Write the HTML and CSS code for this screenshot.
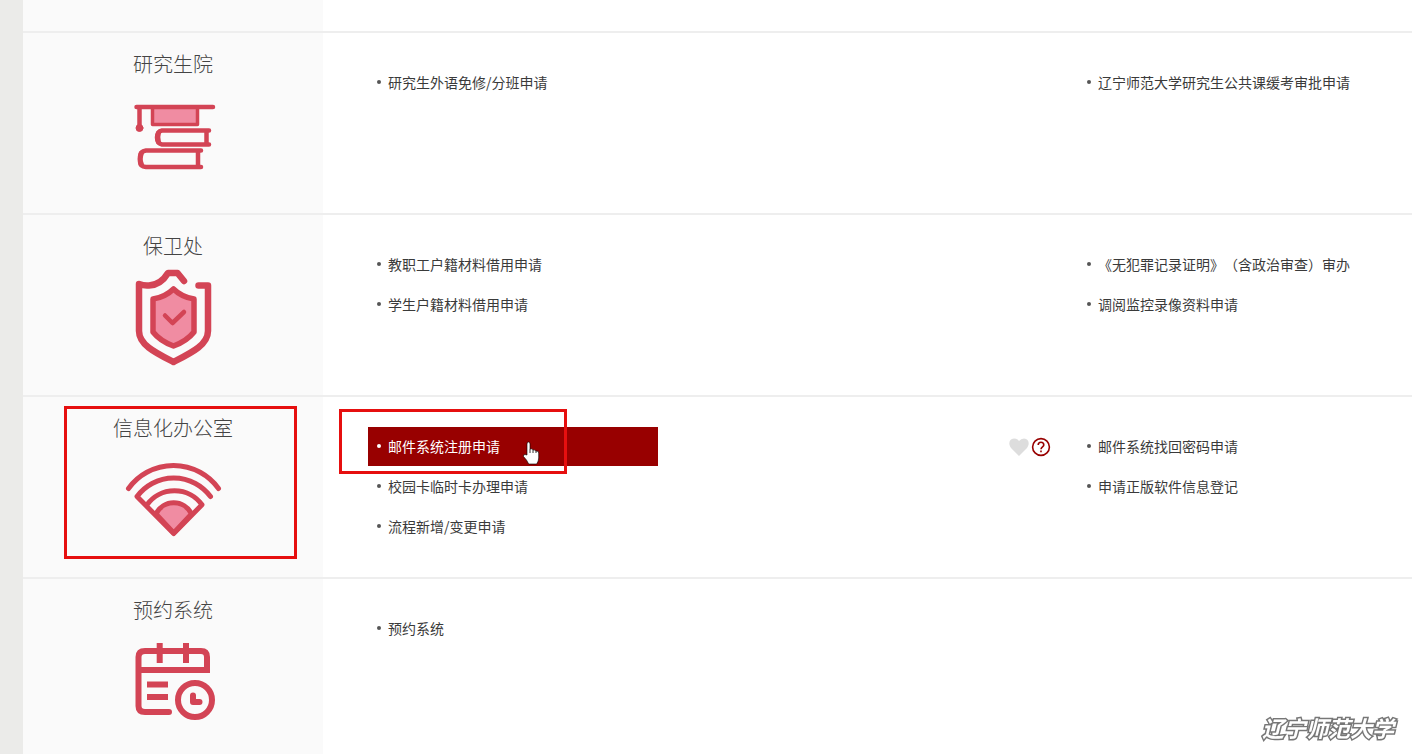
FILE: index.html
```
<!DOCTYPE html>
<html lang="zh-CN">
<head>
    <meta charset="UTF-8">
    <meta name="viewport" content="width=device-width, initial-scale=1.0">
    <title>辽宁师范大学</title>
    <link rel="stylesheet" href="styles.css">
</head>
<body>
    <main class="panel">
        <div class="row-tail"></div>

        <section class="row">
            <div class="category">
                <h2>研究生院</h2>
                <svg class="icon" viewBox="0 0 100 100" aria-hidden="true">
                    <path class="tint" d="M29.500 22h45v17.500h-45z" stroke-width="3.500"/>
                    <path d="M13.500 22H90M16.500 22v20" stroke-width="4.500"/>
                    <circle class="solid" cx="16.500" cy="43" r="3.500"/>
                    <path d="M86 45.500H39q-5 1-5 7t5 7h47M83.500 45.500v14" stroke-width="4.500"/>
                    <path d="M78 65.500H23q-6 1-6 6v5q0 5 6 5.500h55M75 65.500v16.500" stroke-width="4.500"/>
                    <path d="M18.500 68q-2.500 6 0 11.500M35.500 48q-1.500 4.500 0 9" stroke-width="5"/>
                </svg>
            </div>
            <ul class="links">
                <li><a href="#">研究生外语免修/分班申请</a></li>
                <li><a href="#">辽宁师范大学研究生公共课缓考审批申请</a></li>
            </ul>
        </section>

        <section class="row">
            <div class="category">
                <h2>保卫处</h2>
                <svg class="icon" viewBox="0 0 100 100" aria-hidden="true">
                    <path d="M75.500 18.500H85v45.500c0 14-17 22-34.500 31C33 86 16 78 16 64V17q5 2 10 1.500C36 18 42 11 45 6h9.500l6.500 8" stroke-width="6.500"/>
                    <path class="tint" d="M50.500 22q8 8 20.500 10v33q-7 9-20.500 14Q37 74 30 65V32q12.500-2 20.500-10z" stroke-width="5.500"/>
                    <path d="M42 48.500l7.500 7.500L61 45" stroke-width="4.500"/>
                </svg>
            </div>
            <ul class="links">
                <li><a href="#">教职工户籍材料借用申请</a></li>
                <li><a href="#">《无犯罪记录证明》（含政治审查）审办</a></li>
                <li><a href="#">学生户籍材料借用申请</a></li>
                <li><a href="#">调阅监控录像资料申请</a></li>
            </ul>
        </section>

        <section class="row">
            <div class="category marked">
                <h2>信息化办公室</h2>
                <svg class="icon" viewBox="0 0 100 100" aria-hidden="true">
                    <path class="tint" d="M33 65a19.700 19.700 0 0 1 35.500 0L50.700 84z" stroke-width="5"/>
                    <path d="M5.500 39.500a55.500 55.500 0 0 1 90 0" stroke-width="5"/>
                    <path d="M87.500 47.500a45.700 45.700 0 0 0-73.500 0l36.700 37L79 55.700a34 34 0 0 0-55 0" stroke-width="5"/>
                </svg>
            </div>
            <ul class="links">
                <li class="marked">
                    <a class="active" href="#">邮件系统注册申请</a>
                    <span class="actions">
                        <button type="button" aria-label="收藏">
                            <svg viewBox="0 0 20 20" aria-hidden="true"><path fill="#dddddd" d="M10 19L2 11C-1 7 0 2 5 1.500q3 0 5 2.500 2-2.500 5-2.500c5 .5 6 5.500 3 9.500z"/></svg>
                        </button>
                        <button type="button" aria-label="帮助">
                            <svg viewBox="0 0 20 20" aria-hidden="true"><g fill="none" stroke="#980000" stroke-width="1.600"><circle cx="10" cy="10" r="8.400"/><path d="M7.200 8q0-2.800 2.800-2.800T12.800 8c0 1.800-2.800 2-2.800 4.200M10 13.500v1.800"/></g></svg>
                        </button>
                    </span>
                    <svg class="cursor" viewBox="0 0 18 24" aria-hidden="true"><path fill="#fff" stroke="#000" stroke-width=".6" d="M5 14V3q0-2 1.500-2T8 3v5q2.500-.8 3 1 2-.6 2.700 1 3-.5 3 2v5q0 3-2 6h-8Q5 19 1.500 15.500 1 13.500 3 13.500z"/><path fill="none" stroke="#000" stroke-width=".8" d="M8 8v4M11 9v3M14 10v2"/></svg>
                </li>
                <li><a href="#">邮件系统找回密码申请</a></li>
                <li><a href="#">校园卡临时卡办理申请</a></li>
                <li><a href="#">申请正版软件信息登记</a></li>
                <li><a href="#">流程新增/变更申请</a></li>
            </ul>
        </section>

        <section class="row">
            <div class="category">
                <h2>预约系统</h2>
                <svg class="icon" viewBox="0 0 100 100" aria-hidden="true">
                    <path d="M46 81H22q-6.500 0-6.500-6V26q0-6 6.500-6h56q6 0 6 6v13H16" stroke-width="6"/>
                    <path class="flat" d="M36.700 12v20M63 12v20M84 35v7M24 53.500h21M24 66h21" stroke-width="6"/>
                    <circle cx="72" cy="69" r="17" stroke-width="6"/>
                    <path d="M70 64.500V71h6.500" stroke-width="6"/>
                </svg>
            </div>
            <ul class="links">
                <li><a href="#">预约系统</a></li>
            </ul>
        </section>
    </main>
    <p class="watermark">辽宁师范大学</p>
</body>
</html>
```
FILE: styles.css
```
*,
*::before,
*::after {
    box-sizing: border-box;
}
body {
    margin: 0;
    height: 100vh;
    overflow: hidden;
    padding-left: 23px;
    background: #ebebe9;
    color: #3a3a3a;
    font-family: "Noto Sans CJK SC", sans-serif;
    font-size: 14px;
    text-spacing-trim: space-all;
}
.panel {
    min-height: 100%;
    background: linear-gradient(to right, #fafafa 300px, #ffffff 300px);
}
.row-tail {
    height: 33px;
    border-bottom: 2px solid #eeeeee;
}
.row {
    display: flex;
    min-height: 182px;
    border-bottom: 2px solid #eeeeee;
}
.category {
    position: relative;
    flex: 0 0 300px;
    padding-top: 10px;
    text-align: center;
}
.category h2 {
    margin: 0;
    font-size: 20px;
    font-weight: 300;
    line-height: 42px;
    color: #444444;
}
.icon {
    display: block;
    width: 100px;
    height: 100px;
    margin: 0 auto;
    fill: none;
    stroke: #d34455;
    stroke-linecap: round;
    stroke-linejoin: round;
}
.icon .tint {
    fill: #f08ca2;
}
.icon .solid {
    fill: #d34455;
}
.icon .flat {
    stroke-linecap: butt;
}
.links {
    flex: 1;
    display: grid;
    grid-template-columns: minmax(0, 17fr) minmax(0, 8fr);
    grid-auto-rows: 39px;
    row-gap: 1px;
    margin: 0;
    padding: 30px 0 0 45px;
    list-style: none;
}
.links li {
    position: relative;
    display: flex;
    align-items: center;
    justify-content: space-between;
    padding-right: 27px;
}
.links a {
    display: flex;
    align-items: center;
    gap: 7px;
    min-width: 290px;
    padding-left: 9px;
    line-height: 39px;
    color: inherit;
    text-decoration: none;
    white-space: nowrap;
}
.links a::before {
    content: "";
    width: 4px;
    height: 4px;
    margin-bottom: 2px;
    border-radius: 50%;
    background: #555555;
}
.links a.active {
    background: #980000;
    color: #ffffff;
}
.links a.active::before {
    background: #ffffff;
}
.actions {
    display: flex;
    gap: 2px;
}
.actions button {
    width: 20px;
    height: 20px;
    padding: 0;
    border: 0;
    background: none;
    cursor: pointer;
}
.actions svg {
    display: block;
}
.cursor {
    position: absolute;
    left: 154px;
    top: 14px;
    width: 18px;
    height: 24px;
}
/* red frames around the highlighted entries */
.marked::after {
    content: "";
    position: absolute;
    border: 3px solid #e60f0f;
    pointer-events: none;
}
.category.marked::after {
    left: 41px;
    top: 9px;
    width: 233px;
    height: 153px;
}
.links .marked::after {
    left: -29px;
    top: -18px;
    width: 228px;
    height: 65px;
}
.watermark {
    position: fixed;
    right: 18px;
    bottom: 12px;
    margin: 0;
    font-size: 22px;
    font-style: italic;
    font-weight: 700;
    line-height: 30px;
    color: #ffffff;
    -webkit-text-stroke: 3px #777777;
    paint-order: stroke fill;
}
```
